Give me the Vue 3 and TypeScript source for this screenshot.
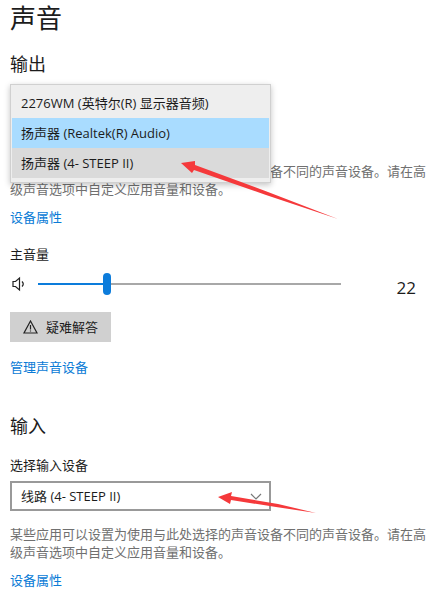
<script setup lang="ts">
import { ref } from 'vue'

const outputs: string[] = [
  '2276WM (英特尔(R) 显示器音频)',
  '扬声器 (Realtek(R) Audio)',
  '扬声器 (4- STEEP II)',
]
const selected = ref(1)
const hovered = ref(2)
const volume = ref(22)
const inputs: string[] = ['线路 (4- STEEP II)']
const input = ref(inputs[0])
const noteStart = '某些应用可以设置为使用与此处选择的声音设'
const noteEnd = '备不同的声音设备。请在高级声音选项中自定义应用音量和设备。'
</script>

<template>
  <main class="page">
    <h1>声音</h1>

    <section class="output">
      <h2>输出</h2>
      <div class="picker">
        <div class="popup" role="listbox" aria-label="输出">
          <button
            v-for="(name, i) in outputs"
            :key="name"
            type="button"
            role="option"
            class="option"
            :class="{ selected: i === selected, hovered: i === hovered }"
            :aria-selected="i === selected"
            @click="selected = i"
            @mouseenter="hovered = i"
          >
            {{ name }}
          </button>
        </div>
        <svg class="arrow arrow-output" width="160" height="60" viewBox="0 0 160 60" aria-hidden="true">
          <path d="M1 2L15 0L15 4L88 31L158 58L86 34L14 9L12 12Z" />
        </svg>
      </div>
      <p class="note beside-popup">{{ noteEnd }}</p>
      <a class="link" href="#output-properties">设备属性</a>

      <label class="label volume-label" for="volume">主音量</label>
      <div class="volume">
        <svg class="speaker" width="14" height="16" viewBox="0 0 14 16" aria-hidden="true">
          <path d="M1 5.5H3.5L7.5 2V14L3.5 10.5H1Z" />
          <path d="M10 5.5Q12.5 8 10 10.5" />
        </svg>
        <input
          id="volume"
          v-model.number="volume"
          type="range"
          min="0"
          max="100"
          :style="{ '--level': volume + '%' }"
        />
        <output for="volume">{{ volume }}</output>
      </div>

      <button type="button" class="troubleshoot">
        <svg width="15" height="14" viewBox="0 0 15 14" aria-hidden="true">
          <path d="M7.5 1L14 13H1Z" />
          <path d="M7.5 5V9.5M7.5 10.5V11.5" />
        </svg>
        疑难解答
      </button>
      <a class="link" href="#manage">管理声音设备</a>
    </section>

    <section class="input">
      <h2>输入</h2>
      <label class="label" for="input-device">选择输入设备</label>
      <div class="select">
        <select id="input-device" v-model="input">
          <option v-for="name in inputs" :key="name">{{ name }}</option>
        </select>
        <svg class="chevron" width="12" height="8" viewBox="0 0 12 8" aria-hidden="true">
          <path d="M1 1L6 6L11 1" />
        </svg>
        <svg class="arrow arrow-input" width="100" height="24" viewBox="0 0 100 24" aria-hidden="true">
          <path d="M0 6L14 1L13 5L60 13L98 22L58 16L13 9L12 13Z" />
        </svg>
      </div>
      <p class="note">{{ noteStart + noteEnd }}</p>
      <a class="link" href="#input-properties">设备属性</a>
    </section>
  </main>
</template>

<style>
body {
  margin: 0;
  background: #fff;
}
</style>

<style scoped>
.page {
  padding: 0 9px 4px 10px;
  color: #1c1c1c;
  font: 13px/18px "Open Sans", "Noto Sans CJK SC", sans-serif;
}
h1,
h2,
p {
  margin: 0;
  font-weight: 400;
}
h1 {
  font-size: 26px;
  line-height: 36px;
}
h2 {
  font-size: 18px;
  line-height: 26px;
}
section {
  display: flex;
  flex-direction: column;
  align-items: flex-start;
}
.output {
  padding-top: 15px;
}
.input {
  padding-top: 37px;
}
.picker {
  position: relative;
  width: 261px;
  height: 78px;
  margin-top: 7px;
}
.popup {
  position: absolute;
  z-index: 1;
  top: 0;
  left: 0;
  box-sizing: border-box;
  width: 100%;
  padding: 3px 1px 4px;
  border: 1px solid #d0d0d0;
  background: #eee;
  box-shadow: 0 2px 6px rgba(0, 0, 0, 0.24);
}
.option {
  display: block;
  box-sizing: border-box;
  width: 100%;
  height: 30px;
  padding: 0 9px;
  border: 0;
  background: transparent;
  color: inherit;
  font: inherit;
  text-align: left;
  white-space: nowrap;
}
.option.hovered {
  background: #dadada;
}
.option.selected {
  background: #a9dcff;
}
.arrow {
  position: absolute;
  z-index: 2;
  fill: #f5393b;
  pointer-events: none;
}
.arrow-output {
  top: 77px;
  left: 170px;
}
.arrow-input {
  top: 10px;
  left: 208px;
}
.note {
  color: #707070;
}
.beside-popup {
  text-indent: 260px;
}
.link {
  margin-top: 10px;
  color: #0a7bd6;
  text-decoration: none;
}
.volume-label {
  margin-top: 19px;
}
.volume {
  display: flex;
  align-items: center;
  align-self: stretch;
  height: 24px;
  margin-top: 9px;
}
.speaker {
  flex: none;
  margin: 0 12px 0 2px;
}
.speaker path,
.troubleshoot path,
.chevron path {
  fill: none;
  stroke: #222;
  stroke-width: 1.2;
}
.volume input {
  flex: 1;
  min-width: 0;
  height: 24px;
  margin: 0;
  appearance: none;
  background: transparent;
}
.volume input::-webkit-slider-runnable-track {
  height: 2px;
  background: linear-gradient(to right, #0c7cdb var(--level), #a8a8a8 var(--level));
}
.volume input::-webkit-slider-thumb {
  width: 8px;
  height: 22px;
  margin-top: -10px;
  border-radius: 4px;
  appearance: none;
  background: #0c7cdb;
}
.volume output {
  box-sizing: border-box;
  width: 86px;
  padding: 8px 11px 0 0;
  font-size: 17px;
  text-align: right;
}
.troubleshoot {
  display: flex;
  align-items: center;
  gap: 8px;
  height: 30px;
  margin-top: 16px;
  padding: 0 13px;
  border: 0;
  background: #d0d0d0;
  color: inherit;
  font: inherit;
}
.troubleshoot + .link {
  margin-top: 16px;
}
.input .label {
  margin-top: 17px;
}
.select {
  position: relative;
  width: 261px;
  margin: 7px 0 14px;
}
.select select {
  display: block;
  box-sizing: border-box;
  width: 100%;
  height: 30px;
  padding: 0 28px 0 9px;
  border: 2px solid #999;
  border-radius: 0;
  appearance: none;
  background: #fff;
  color: inherit;
  font: inherit;
}
.chevron {
  position: absolute;
  top: 12px;
  right: 9px;
  pointer-events: none;
}
.chevron path {
  stroke: #777;
}
</style>
